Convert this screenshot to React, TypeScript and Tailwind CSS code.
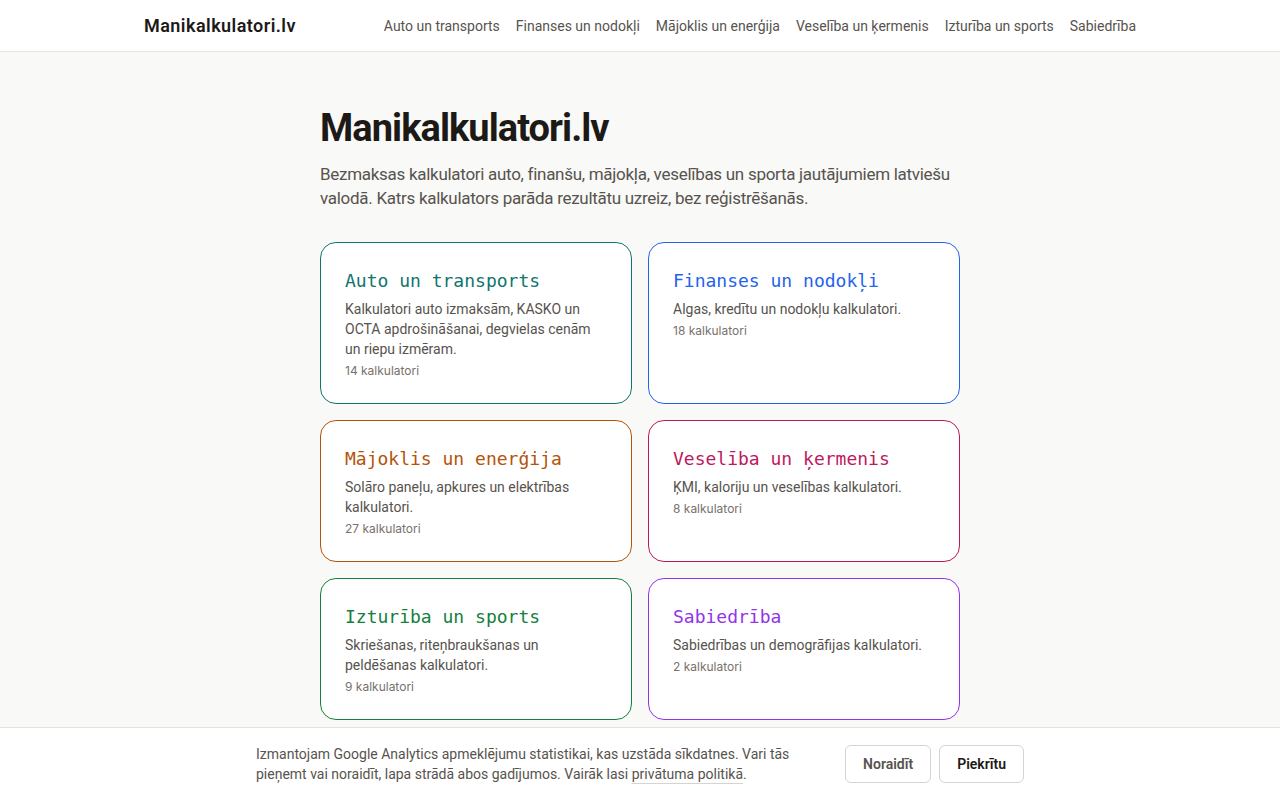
const sans = "font-['Roboto','Liberation_Sans',sans-serif]";

const nav = [
  'Auto un transports',
  'Finanses un nodokļi',
  'Mājoklis un enerģija',
  'Veselība un ķermenis',
  'Izturība un sports',
  'Sabiedrība',
];

type Category = {
  title: string;
  desc: string;
  count: string;
  border: string;
  text: string;
};

const categories: Category[] = [
  {
    title: 'Auto un transports',
    desc: 'Kalkulatori auto izmaksām, KASKO un OCTA apdrošināšanai, degvielas cenām un riepu izmēram.',
    count: '14 kalkulatori',
    border: 'border-[#0f766e]',
    text: 'text-[#0f766e]',
  },
  {
    title: 'Finanses un nodokļi',
    desc: 'Algas, kredītu un nodokļu kalkulatori.',
    count: '18 kalkulatori',
    border: 'border-[#2563eb]',
    text: 'text-[#2563eb]',
  },
  {
    title: 'Mājoklis un enerģija',
    desc: 'Solāro paneļu, apkures un elektrības kalkulatori.',
    count: '27 kalkulatori',
    border: 'border-[#b45309]',
    text: 'text-[#b45309]',
  },
  {
    title: 'Veselība un ķermenis',
    desc: 'ĶMI, kaloriju un veselības kalkulatori.',
    count: '8 kalkulatori',
    border: 'border-[#be185d]',
    text: 'text-[#be185d]',
  },
  {
    title: 'Izturība un sports',
    desc: 'Skriešanas, riteņbraukšanas un peldēšanas kalkulatori.',
    count: '9 kalkulatori',
    border: 'border-[#15803d]',
    text: 'text-[#15803d]',
  },
  {
    title: 'Sabiedrība',
    desc: 'Sabiedrības un demogrāfijas kalkulatori.',
    count: '2 kalkulatori',
    border: 'border-[#9333ea]',
    text: 'text-[#9333ea]',
  },
];

export default function App() {
  return (
    <div className={`min-h-screen bg-[#f9f9f7] text-[#1c1917] ${sans}`}>
      <header className="h-[52px] border-b border-[#e5e4df] bg-white">
        <div className="mx-auto flex h-full max-w-5xl items-center justify-between px-4">
          <a href="#" className="text-lg font-semibold tracking-[0.025em] text-[#1c1917]">
            Manikalkulatori.lv
          </a>
          <nav className="flex gap-4 text-sm text-[#57534e]">
            {nav.map((n) => (
              <a key={n} href="#">
                {n}
              </a>
            ))}
          </nav>
        </div>
      </header>

      <main className="mx-auto max-w-2xl px-4 pb-32 pt-[54px]">
        <h1 className="text-[38px] font-bold leading-[44px] tracking-tight">Manikalkulatori.lv</h1>
        <p className="mt-3 text-[17px] leading-6 tracking-[-0.017em] text-[#57534e]">
          Bezmaksas kalkulatori auto, finanšu, mājokļa, veselības un sporta jautājumiem latviešu
          valodā. Katrs kalkulators parāda rezultātu uzreiz, bez reģistrēšanās.
        </p>

        <div className="mt-8 grid grid-cols-2 gap-4">
          {categories.map((c) => (
            <a
              key={c.title}
              href="#"
              className={`block rounded-2xl border bg-white px-6 py-6 ${c.border}`}
            >
              <h2
                className={`font-['DejaVu_Sans_Mono','Liberation_Mono',monospace] text-lg leading-7 ${c.text}`}
              >
                {c.title}
              </h2>
              <p className="mt-1 text-sm leading-5 text-[#57534e]">{c.desc}</p>
              <p className="mt-1 font-['Inter',sans-serif] text-xs leading-4 text-[#78716c]">
                {c.count}
              </p>
            </a>
          ))}
        </div>
      </main>

      <div className="fixed inset-x-0 bottom-0 border-t border-[#e5e4df] bg-white">
        <div className="mx-auto flex h-[72px] max-w-3xl items-center justify-between gap-6">
          <p className="max-w-[560px] text-sm leading-5 text-[#57534e]">
            Izmantojam Google Analytics apmeklējumu statistikai, kas uzstāda sīkdatnes. Vari tās
            pieņemt vai noraidīt, lapa strādā abos gadījumos. Vairāk lasi{' '}
            <a href="#" className="underline decoration-[#d6d3d1] underline-offset-4">
              privātuma politikā
            </a>
            .
          </p>
          <div className="flex shrink-0 gap-2">
            <button className="h-[38px] rounded-md border border-[#d6d3d1] bg-white px-[17px] text-sm font-semibold text-[#57534e]">
              Noraidīt
            </button>
            <button className="h-[38px] rounded-md border border-[#d6d3d1] bg-white px-[17px] text-sm font-semibold text-[#1c1917]">
              Piekrītu
            </button>
          </div>
        </div>
      </div>
    </div>
  );
}
